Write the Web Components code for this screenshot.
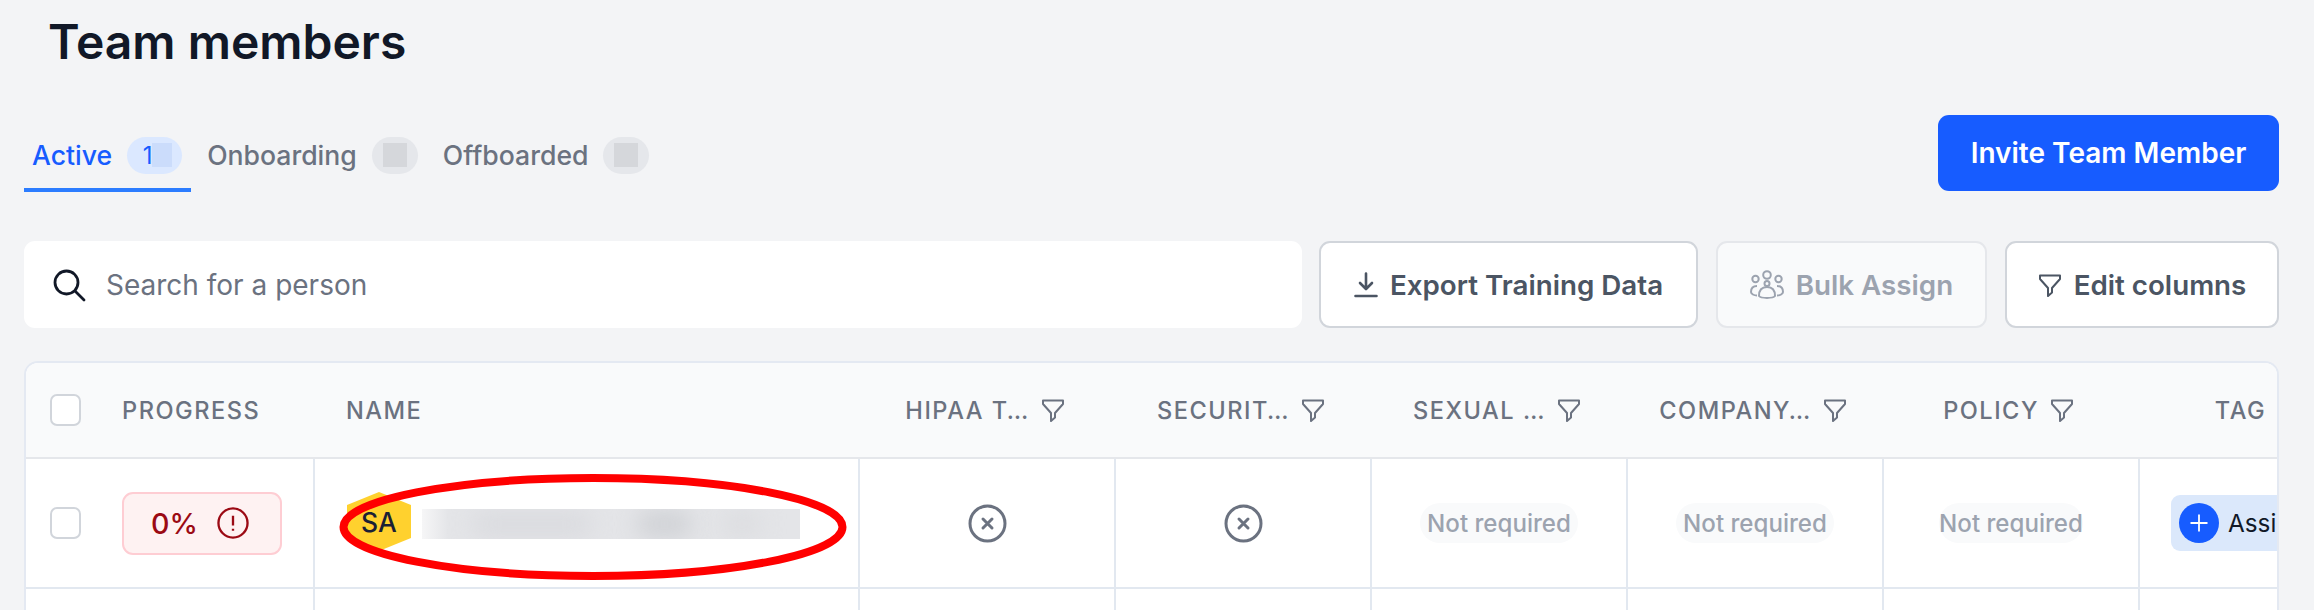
<!DOCTYPE html>
<html lang="en">
<head>
<meta charset="utf-8">
<title>Team members</title>
<style>
  html, body { margin: 0; height: 610px; overflow: hidden; background: #f3f4f6; }
  body { font-family: Inter, "Liberation Sans", sans-serif; }
</style>
</head>
<body>
<team-page>
  <page-title>Team members</page-title>
  <page-nav slot="nav">
    <tab-item active count="1">Active</tab-item>
    <tab-item>Onboarding</tab-item>
    <tab-item>Offboarded</tab-item>
  </page-nav>
  <tool-bar slot="tools">
    <search-box></search-box>
    <action-button icon="download" width="379">Export Training Data</action-button>
    <action-button icon="users" width="271" disabled>Bulk Assign</action-button>
    <action-button icon="filter" width="274">Edit columns</action-button>
  </tool-bar>
  <members-table slot="table"></members-table>
  <circle-mark slot="mark"></circle-mark>
</team-page>

<script>
const FILTER = `<svg width="24" height="24" viewBox="0 0 24 24" fill="none" stroke="currentColor" stroke-width="2" stroke-linejoin="round"><path d="M2 2.500h20v3.500l-8 9v4.500l-4 3.500v-8l-8-9z"/></svg>`;

class TeamPage extends HTMLElement {
  constructor() {
    super();
    this.shadowDOM = this.attachShadow({ mode: "open" });
  }
  connectedCallback() {
    this.shadowDOM.innerHTML = `
      <style>
        :host { display: block; padding: 0 35px 0 24px; height: 610px; box-sizing: border-box; position: relative; overflow: hidden; }
        .nav { display: flex; justify-content: space-between; align-items: flex-end; margin-top: 39px; margin-bottom: 49px; }
        button {
          width: 341px; height: 76px; border: 0; border-radius: 11px; background: #175cff; color: #fff;
          font: 600 28px Inter, sans-serif; margin-bottom: 1px;
        }
      </style>
      <slot></slot>
      <div class="nav"><slot name="nav"></slot><button>Invite Team Member</button></div>
      <slot name="tools"></slot>
      <slot name="table"></slot>
      <slot name="mark"></slot>
    `;
  }
}

class PageTitle extends HTMLElement {
  constructor() {
    super();
    this.attachShadow({ mode: "open" }).innerHTML = `
      <style>
        :host { display: block; padding: 14px 0 0 24px; height: 62px; font: 600 48px/56px Inter, sans-serif; color: #111827; }
      </style>
      <slot></slot>
    `;
  }
}

class PageNav extends HTMLElement {
  constructor() {
    super();
    this.attachShadow({ mode: "open" }).innerHTML = `
      <style>:host { display: flex; }</style>
      <slot></slot>
    `;
  }
}

class TabItem extends HTMLElement {
  constructor() {
    super();
    this.shadowDOM = this.attachShadow({ mode: "open" });
  }
  connectedCallback() {
    const active = this.hasAttribute("active");
    const count = this.getAttribute("count") || "";
    this.shadowDOM.innerHTML = `
      <style>
        :host {
          display: flex; align-items: center; gap: 15px; height: 54px; padding: 0 9px 0 ${active ? 8 : 9}px; margin-right: 7px; box-sizing: content-box;
          font: 500 26.600px Inter, sans-serif; color: ${active ? "#175cff" : "#6b7280"};
          border-bottom: 4px solid ${active ? "#2b7cff" : "transparent"}; position: relative;
        }
        .badge {
          width: ${active ? 55 : 46}px; height: 37px; border-radius: 19px; background: ${active ? "#dbe8ff" : "#e5e7eb"};
          display: flex; align-items: center; justify-content: center; position: relative; font-size: 24px; font-weight: 400;
        }
        .blur { position: absolute; top: 6px; left: ${active ? 25 : 11}px; width: ${active ? 20 : 24}px; height: 24px; background: ${active ? "#cbdcfb" : "#d5d7db"}; }
        .num { position: relative; margin-right: 14px; }
        .text { margin-bottom: 12px; }
        .badge { margin-bottom: 12px; }
      </style>
      <span class="text"><slot></slot></span>
      <span class="badge"><span class="blur"></span>${count ? `<span class="num">${count}</span>` : ""}</span>
    `;
  }
}

class ToolBar extends HTMLElement {
  constructor() {
    super();
    this.attachShadow({ mode: "open" }).innerHTML = `
      <style>:host { display: flex; gap: 18px; height: 87px; margin-bottom: 33px; }</style>
      <slot></slot>
    `;
  }
}

class SearchBox extends HTMLElement {
  constructor() {
    super();
    this.attachShadow({ mode: "open" }).innerHTML = `
      <style>
        :host {
          display: flex; align-items: center; flex: 1; gap: 20px; padding-left: 28px; margin-right: -1px; background: #fff; border-radius: 11px;
          font: 400 28px Inter, sans-serif; color: #6b7280;
        }
        svg { flex: none; }
      </style>
      <svg width="34" height="34" viewBox="0 0 34 34" fill="none" stroke="#111827" stroke-width="2.800" stroke-linecap="round"><circle cx="14.500" cy="14.500" r="11.500"/><path d="M23 23l9 9"/></svg>
      <span>Search for a person</span>
    `;
  }
}

const BUTTON_ICONS = {
  download: `<svg width="24" height="26" viewBox="0 0 24 26" fill="none" stroke="currentColor" stroke-width="2.600" stroke-linecap="round" stroke-linejoin="round"><path d="M12 1.500v15M6 11l6 6 6-6M1.500 24h21"/></svg>`,
  users: `<svg width="34" height="30" viewBox="0 0 34 30" fill="none" stroke="currentColor" stroke-width="2"><circle cx="17" cy="5" r="3.800"/><circle cx="5.500" cy="9" r="3.200"/><circle cx="28.500" cy="9" r="3.200"/><circle cx="17" cy="13.500" r="2.500"/><path d="M9 26c0-6 3-9 8-9s8 3 8 9c-2 2.500-14 2.500-16 0z"/><path d="M7 16c-3.500 0-6 2-6 6 0 2 3 3.500 6 3.500M27 16c3.500 0 6 2 6 6 0 2-3 3.500-6 3.500"/></svg>`,
  filter: FILTER
};

class ActionButton extends HTMLElement {
  constructor() {
    super();
    this.shadowDOM = this.attachShadow({ mode: "open" });
  }
  connectedCallback() {
    const off = this.hasAttribute("disabled");
    this.shadowDOM.innerHTML = `
      <style>
        :host {
          display: flex; align-items: center; justify-content: center; gap: 12px; box-sizing: border-box; flex: none;
          width: ${this.getAttribute("width")}px; border-radius: 11px;
          border: 2px solid ${off ? "#e5e7eb" : "#d1d5db"}; background: ${off ? "#f9fafb" : "#fff"};
          color: ${off ? "#9ca3af" : "#4b5563"}; font: 600 27.750px Inter, sans-serif;
        }
        svg { display: block; }
      </style>
      ${BUTTON_ICONS[this.getAttribute("icon")]}
      <span><slot></slot></span>
    `;
  }
}

class HeadCell extends HTMLElement {
  constructor() {
    super();
    this.shadowDOM = this.attachShadow({ mode: "open" });
  }
  connectedCallback() {
    const left = this.hasAttribute("left");
    this.shadowDOM.innerHTML = `
      <style>
        :host {
          display: flex; align-items: center; justify-content: ${left ? "flex-start" : "center"}; gap: 11px; box-sizing: border-box;
          white-space: nowrap; font: 500 23.600px Inter, sans-serif; letter-spacing: 1.500px; color: #6b7280;
          padding-left: ${left ? this.getAttribute("left") : 0}px; padding-right: ${this.getAttribute("shift") || 0}px;
        }
        svg { display: block; flex: none; }
      </style>
      <span><slot></slot></span>
      ${this.hasAttribute("filter") ? FILTER : ""}
    `;
  }
}

class CheckBox extends HTMLElement {
  constructor() {
    super();
    this.attachShadow({ mode: "open" }).innerHTML = `
      <style>
        :host { display: block; flex: none; width: 31px; height: 32px; box-sizing: border-box; border: 2px solid #d1d5db; border-radius: 7px; background: #fff; }
      </style>
    `;
  }
}

class ProgressBadge extends HTMLElement {
  constructor() {
    super();
    this.attachShadow({ mode: "open" }).innerHTML = `
      <style>
        :host {
          display: flex; align-items: center; gap: 19px; justify-content: center; width: 160px; height: 63px; box-sizing: border-box; padding-right: 4px;
          border: 2px solid #fecdd3; border-radius: 11px; background: #fef2f2; color: #9b0a14; font: 500 28.600px Inter, sans-serif;
        }
        svg { display: block; }
      </style>
      <span><slot></slot></span>
      <svg width="32" height="32" viewBox="0 0 33 33" fill="none" stroke="currentColor" stroke-width="2.400"><circle cx="16.500" cy="16.500" r="15"/><path d="M16.500 9v10M16.500 22.500v2"/></svg>
    `;
  }
}

class UserCell extends HTMLElement {
  constructor() {
    super();
    this.attachShadow({ mode: "open" }).innerHTML = `
      <style>
        :host { display: flex; align-items: center; padding-left: 32px; gap: 11px; }
        .hex {
          width: 64px; height: 59px; flex: none; margin-top: -3px; background: #ffd12e; color: #1a2035;
          clip-path: polygon(50% 0, 100% 22%, 100% 78%, 50% 100%, 0 78%, 0 22%);
          display: flex; align-items: center; justify-content: center; font: 500 26.500px Inter, sans-serif;
        }
        .blur { width: 378px; height: 30px; overflow: hidden; background: linear-gradient(90deg, #f6f6f7, #e4e5e8 7%); position: relative; margin-top: 1px; }
        .blur i { position: absolute; top: 2px; height: 26px; filter: blur(11px); border-radius: 12px; }
      </style>
      <div class="hex"><slot></slot></div>
      <div class="blur">
        <i style="left:50px;width:120px;background:#dadbdf"></i>
        <i style="left:215px;width:55px;background:#cfd1d5"></i>
        <i style="left:300px;width:40px;background:#dcdde0"></i>
      </div>
    `;
  }
}

class StatusX extends HTMLElement {
  constructor() {
    super();
    this.attachShadow({ mode: "open" }).innerHTML = `
      <style>:host { display: block; width: 39px; height: 39px; } svg { display: block; }</style>
      <svg width="39" height="39" viewBox="0 0 39 39" fill="none" stroke="#6b7280" stroke-width="3" stroke-linecap="round"><circle cx="19.500" cy="19.500" r="17.500"/><path d="M15 15l9 9M24 15l-9 9"/></svg>
    `;
  }
}

class NotRequired extends HTMLElement {
  constructor() {
    super();
    this.attachShadow({ mode: "open" }).innerHTML = `
      <style>
        :host {
          display: flex; align-items: center; height: 40px; padding: 0 7px; border-radius: 20px; background: #f9fafb;
          color: #9ca3af; font: 500 24.100px Inter, sans-serif; white-space: nowrap;
        }
      </style>
      Not required
    `;
  }
}

class AssignTag extends HTMLElement {
  constructor() {
    super();
    this.attachShadow({ mode: "open" }).innerHTML = `
      <style>
        :host {
          display: flex; align-items: center; gap: 9px; width: 180px; height: 56px; padding-left: 8px; box-sizing: border-box; flex: none;
          background: #dbe8fb; border-radius: 9px; color: #111827; font: 400 24.300px Inter, sans-serif; white-space: nowrap;
        }
        svg { display: block; flex: none; }
      </style>
      <svg width="40" height="40" viewBox="0 0 40 40"><circle cx="20" cy="20" r="20" fill="#175cff"/><path d="M20 11.500v17M11.500 20h17" stroke="#fff" stroke-width="1.800"/></svg>
      Assign
    `;
  }
}

class MembersTable extends HTMLElement {
  constructor() {
    super();
    this.shadowDOM = this.attachShadow({ mode: "open" });
  }
  connectedCallback() {
    const heads = [["HIPAA T…", 2], ["SECURIT…", 2], ["SEXUAL …", 2], ["COMPANY…", 2], ["POLICY", 3], ["TAG", 16]];
    const filler = `<div class="cell first"></div>` + `<div class="cell"></div>`.repeat(7);
    this.shadowDOM.innerHTML = `
      <style>
        :host {
          display: block; height: 260px; overflow: hidden; box-sizing: border-box; position: relative;
          background: #fff; border: 2px solid #e4e9f2; border-bottom: 0; border-radius: 14px 14px 0 0;
        }
        .grid { display: grid; grid-template-columns: 287px 545px repeat(5, 256px) 256px; grid-template-rows: 96px 130px 40px; width: 1600px; }
        .head { display: contents; }
        .head > * { background: #f9fafb; border-bottom: 2px solid #e5e7eb; }
        .first-head { display: flex; align-items: center; gap: 41px; padding-left: 24px; }
        .label { font: 500 23.600px Inter, sans-serif; letter-spacing: 1.500px; color: #6b7280; }
        .cell { display: flex; align-items: center; justify-content: center; border-left: 2px solid #e2e8f0; border-bottom: 2px solid #e2e8f0; box-sizing: border-box; min-width: 0; }
        .cell.first { border-left: 0; justify-content: flex-start; gap: 41px; padding-left: 24px; }
        .cell.name { justify-content: flex-start; }
        .cell.tag { justify-content: flex-start; padding-left: 31px; overflow: hidden; }
      </style>
      <div class="grid">
        <div class="head">
          <div class="first-head"><check-box></check-box><span class="label">PROGRESS</span></div>
          <head-cell left="33">NAME</head-cell>
          ${heads.map((h) => `<head-cell filter shift="${h[1]}">${h[0]}</head-cell>`).join("")}
        </div>
        <div class="cell first"><check-box></check-box><progress-badge>0%</progress-badge></div>
        <div class="cell name"><user-cell>SA</user-cell></div>
        <div class="cell"><status-x></status-x></div>
        <div class="cell"><status-x></status-x></div>
        <div class="cell"><not-required></not-required></div>
        <div class="cell"><not-required></not-required></div>
        <div class="cell"><not-required style="padding:0"></not-required></div>
        <div class="cell tag"><assign-tag></assign-tag></div>
        ${filler}
      </div>
    `;
  }
}

class CircleMark extends HTMLElement {
  constructor() {
    super();
    this.attachShadow({ mode: "open" }).innerHTML = `
      <style>:host { position: absolute; left: 339px; top: 473px; z-index: 2; display: block; pointer-events: none; } svg { display: block; }</style>
      <svg width="508" height="108" viewBox="0 0 508 108"><ellipse cx="254" cy="54" rx="249.500" ry="49" fill="none" stroke="#ff0000" stroke-width="8"/></svg>
    `;
  }
}

customElements.define("team-page", TeamPage);
customElements.define("page-title", PageTitle);
customElements.define("page-nav", PageNav);
customElements.define("tab-item", TabItem);
customElements.define("tool-bar", ToolBar);
customElements.define("search-box", SearchBox);
customElements.define("action-button", ActionButton);
customElements.define("head-cell", HeadCell);
customElements.define("check-box", CheckBox);
customElements.define("progress-badge", ProgressBadge);
customElements.define("user-cell", UserCell);
customElements.define("status-x", StatusX);
customElements.define("not-required", NotRequired);
customElements.define("assign-tag", AssignTag);
customElements.define("members-table", MembersTable);
customElements.define("circle-mark", CircleMark);
</script>
</body>
</html>
